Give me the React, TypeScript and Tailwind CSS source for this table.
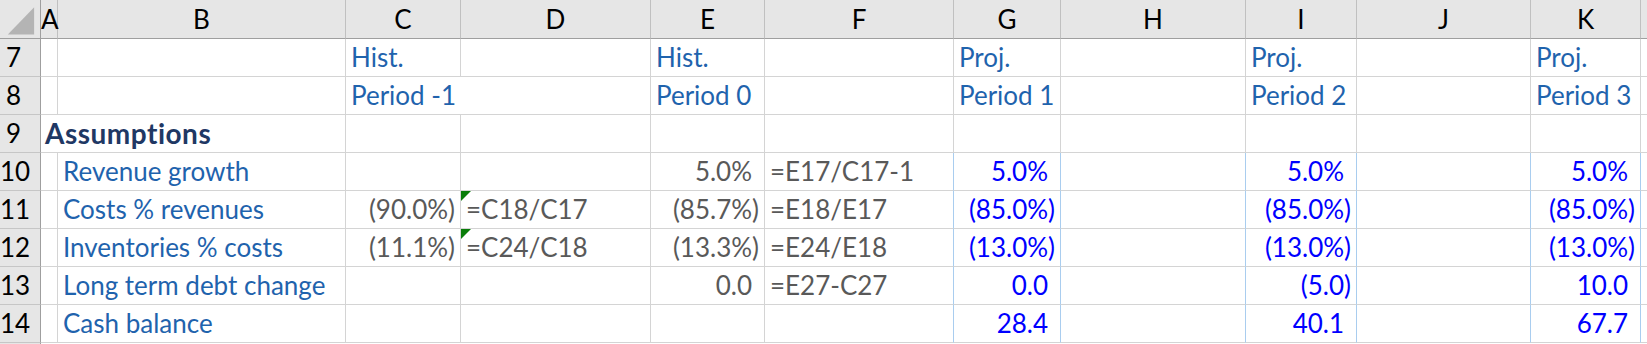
import React from 'react';

type Cell = {
  t?: string;
  k?: 'label' | 'head' | 'gray' | 'input' | 'title';
  r?: boolean; // right aligned number
  pos?: boolean; // positive number, keeps room for ")"
  span?: number;
  tri?: boolean; // green error marker
};

const COLS = 'grid grid-cols-[41px_17px_288px_115px_190px_114px_189px_107px_185px_111px_174px_110px_7px]';

const TONE: Record<string, string> = {
  label: 'text-[#1f63ad]',
  head: 'text-[#1f63ad]',
  gray: 'text-[#595959]',
  input: 'text-[#0000ff]',
  title: 'text-[#1f3864] font-bold text-[28px] tracking-[0.5px]',
};

const e: Cell = {};
const lab = (t: string): Cell => ({ t, k: 'label' });
const hd = (t: string, span?: number): Cell => ({ t, k: 'head', span });
const g = (t: string, pos?: boolean): Cell => ({ t, k: 'gray', r: true, pos });
const f = (t: string, tri?: boolean): Cell => ({ t, k: 'gray', tri });
const inp = (t: string, pos?: boolean): Cell => ({ t, k: 'input', r: true, pos });

const ROWS: { n: number; cells: Cell[]; blue?: boolean }[] = [
  { n: 7, cells: [e, e, hd('Hist.'), e, hd('Hist.'), e, hd('Proj.'), e, hd('Proj.'), e, hd('Proj.'), e] },
  { n: 8, cells: [e, e, hd('Period -1', 2), hd('Period 0'), e, hd('Period 1'), e, hd('Period 2'), e, hd('Period 3'), e] },
  { n: 9, cells: [{ t: 'Assumptions', k: 'title', span: 2 }, e, e, e, e, e, e, e, e, e, e] },
  {
    n: 10,
    blue: true,
    cells: [e, lab('Revenue growth'), e, e, g('5.0%', true), f('=E17/C17-1'), inp('5.0%', true), e, inp('5.0%', true), e, inp('5.0%', true), e],
  },
  {
    n: 11,
    blue: true,
    cells: [e, lab('Costs % revenues'), g('(90.0%)'), f('=C18/C17', true), g('(85.7%)'), f('=E18/E17'), inp('(85.0%)'), e, inp('(85.0%)'), e, inp('(85.0%)'), e],
  },
  {
    n: 12,
    blue: true,
    cells: [e, lab('Inventories % costs'), g('(11.1%)'), f('=C24/C18', true), g('(13.3%)'), f('=E24/E18'), inp('(13.0%)'), e, inp('(13.0%)'), e, inp('(13.0%)'), e],
  },
  {
    n: 13,
    blue: true,
    cells: [e, lab('Long term debt change'), e, e, g('0.0', true), f('=E27-C27'), inp('0.0', true), e, inp('(5.0)'), e, inp('10.0', true), e],
  },
  {
    n: 14,
    blue: true,
    cells: [e, lab('Cash balance'), e, e, e, e, inp('28.4', true), e, inp('40.1', true), e, inp('67.7', true), e],
  },
];

const LETTERS = ['A', 'B', 'C', 'D', 'E', 'F', 'G', 'H', 'I', 'J', 'K', ''];

function Row({ n, cells, blue }: { n: number; cells: Cell[]; blue?: boolean }) {
  let col = 0;
  return (
    <div className={`${COLS} h-[38px]`}>
      <div className="border-r border-b border-r-[#9f9f9f] border-b-[#c6c6c6] bg-[#e6e6e6] pr-[13px] text-center leading-[37px] text-black">
        {n}
      </div>
      {cells.map((c, i) => {
        const start = col;
        const span = c.span ?? 1;
        col += span;
        const last = start + span - 1;
        const blueRight = blue && last >= 5 && last <= 10;
        return (
          <div
            key={i}
            className={`relative overflow-hidden whitespace-nowrap border-r border-b border-b-[#d4d4d4] leading-[37px] ${
              blueRight ? 'border-r-[#a9cdef]' : 'border-r-[#d4d4d4]'
            } ${span === 2 ? 'col-span-2' : ''} ${c.r ? 'pr-[5px] text-right' : c.k === 'title' ? 'pl-[4px]' : 'pl-[5px]'} ${
              c.k ? TONE[c.k] : ''
            }`}
          >
            {c.tri && (
              <span className="absolute left-0 top-0 h-0 w-0 border-t-[10px] border-r-[10px] border-t-[#0a7d0a] border-r-transparent" />
            )}
            {c.t}
            {c.pos && <span className="invisible">)</span>}
          </div>
        );
      })}
    </div>
  );
}

export default function App() {
  return (
    <div className="h-[344px] w-[1647px] overflow-hidden bg-white font-['Lato',sans-serif] text-[26px]">
      <div className={`${COLS} h-[39px] bg-[#e6e6e6]`}>
        <div className="flex items-center justify-center border-r border-b border-r-[#9f9f9f] border-b-[#9f9f9f]">
          <svg width="41" height="38" viewBox="0 0 41 38">
            <polygon points="8,35 35,35 35,7" fill="#b4b4b4" />
          </svg>
        </div>
        {LETTERS.map((l, i) => (
          <div
            key={i}
            className="border-r border-b border-r-[#c0c0c0] border-b-[#9f9f9f] text-center leading-[38px] text-black"
          >
            {l}
          </div>
        ))}
      </div>
      {ROWS.map((r) => (
        <Row key={r.n} n={r.n} cells={r.cells} blue={r.blue} />
      ))}
      <div className={`${COLS} h-[10px]`}>
        <div className="border-r border-r-[#9f9f9f] bg-[#e6e6e6]" />
      </div>
    </div>
  );
}
